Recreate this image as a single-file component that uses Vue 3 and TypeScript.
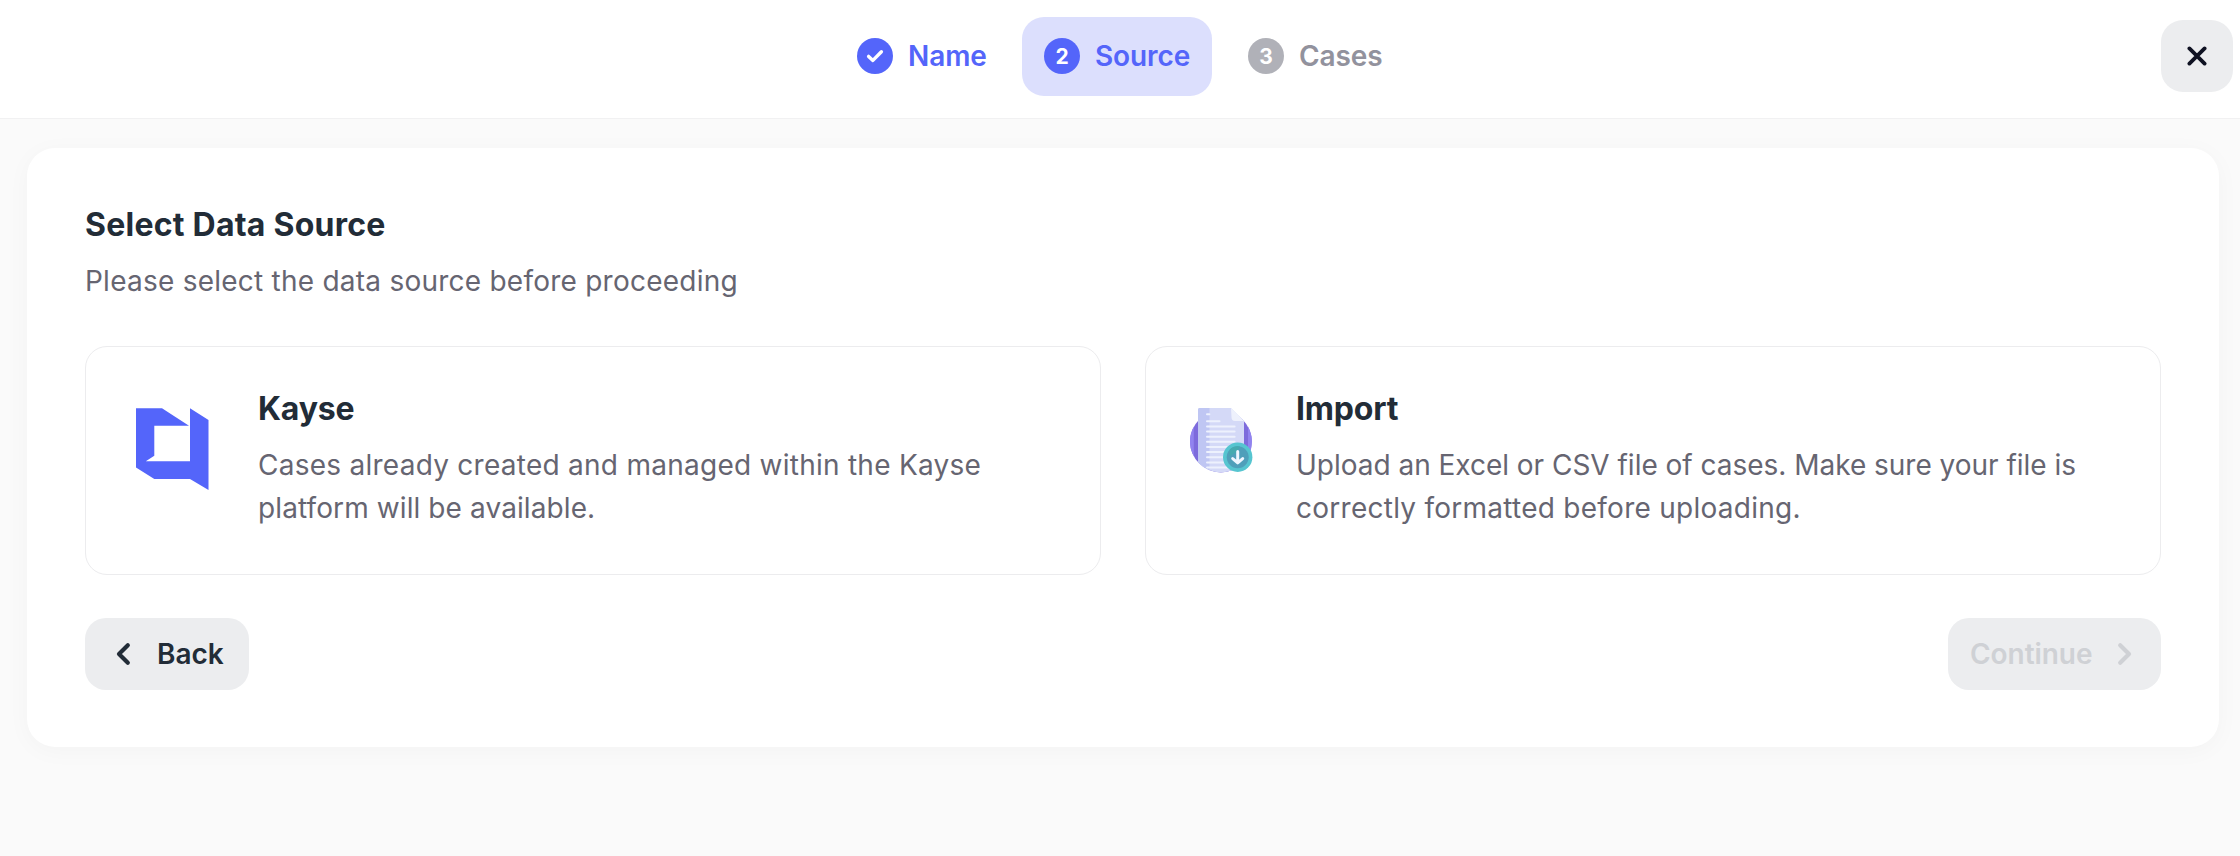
<script setup lang="ts">
import { ref } from 'vue'

interface Step {
  id: number
  label: string
  state: 'done' | 'active' | 'todo'
}

interface Source {
  id: 'kayse' | 'import'
  title: string
  lines: string[]
}

const steps: Step[] = [
  { id: 1, label: 'Name', state: 'done' },
  { id: 2, label: 'Source', state: 'active' },
  { id: 3, label: 'Cases', state: 'todo' },
]

const sources: Source[] = [
  {
    id: 'kayse',
    title: 'Kayse',
    lines: ['Cases already created and managed within the Kayse', 'platform will be available.'],
  },
  {
    id: 'import',
    title: 'Import',
    lines: [
      'Upload an Excel or CSV file of cases. Make sure your file is',
      'correctly formatted before uploading.',
    ],
  },
]

const docLines = [6.3, 13.3, 18.4, 23.6, 28.7, 33.8, 39, 44.1, 49.3, 54.4, 59.5]
const selected = ref<Source['id'] | null>(null)
</script>

<template>
  <div class="page">
    <header class="header">
      <nav class="steps">
        <div v-for="step in steps" :key="step.id" class="step" :class="`step--${step.state}`">
          <span class="step__dot">
            <svg v-if="step.state === 'done'" width="18" height="14" viewBox="0 0 18 14">
              <path d="M2.6 7.4 L6.9 11.4 L15.4 2.8" fill="none" stroke="#fff" stroke-width="3.4" stroke-linecap="round" stroke-linejoin="round" />
            </svg>
            <template v-else>{{ step.id }}</template>
          </span>
          <span class="step__label">{{ step.label }}</span>
        </div>
      </nav>
      <button class="close" type="button" aria-label="Close">
        <svg width="20" height="20" viewBox="0 0 20 20">
          <path d="M2.4 2.4 L17.6 17.6 M17.6 2.4 L2.4 17.6" stroke="#0f1222" stroke-width="3.8" stroke-linecap="round" />
        </svg>
      </button>
    </header>

    <main class="panel">
      <h1 class="title">Select Data Source</h1>
      <p class="subtitle">Please select the data source before proceeding</p>

      <div class="sources">
        <article
          v-for="source in sources"
          :key="source.id"
          class="source"
          :class="`source--${source.id}`"
          @click="selected = source.id"
        >
          <svg v-if="source.id === 'kayse'" class="source__icon" width="73" height="82" viewBox="0 0 73 82">
            <path
              fill="#5465fa"
              fill-rule="evenodd"
              d="M0 .3 H26 L53 17.8 H18.3 V47.8 L9.8 53.2 H54 V.3 L72.5 12 V82 L54 71 H18.3 L0 59.5 Z"
            />
          </svg>
          <svg v-else class="source__icon" width="63" height="66" viewBox="0 0 63 66">
            <defs>
              <clipPath id="sheet">
                <path d="M8 0 H54 V33.5 H61.8 A30.9 30.9 0 0 1 0 33.5 H8 Z" />
              </clipPath>
            </defs>
            <circle cx="30.9" cy="33.5" r="30.9" fill="#7d6bdc" />
            <path d="M3.8 18.5 A30.9 30.9 0 0 0 3.8 48.5 Z M58 18.5 A30.9 30.9 0 0 1 58 48.5 Z" fill="#9183ef" />
            <g clip-path="url(#sheet)">
              <path d="M8 1.5 Q8 0 9.5 0 H41 L54 13 V70 H8 Z" fill="#d4d9f7" />
              <path d="M8 1.5 Q8 0 9.5 0 H19.5 V70 H8 Z" fill="#bfc6f3" />
              <g stroke="#edf1fd" stroke-width="2" stroke-linecap="round">
                <line
                  v-for="(y, i) in docLines"
                  :key="y"
                  x1="17"
                  :y1="y"
                  :x2="i === 0 ? 19.4 : i === 1 ? 29.5 : 44.6"
                  :y2="y"
                />
              </g>
            </g>
            <path d="M41 0 L54 13 H45 Q41.5 13 41.5 9 Z" fill="#eef1fc" />
            <circle cx="47.7" cy="49.2" r="14.7" fill="#56c5d0" />
            <circle cx="47.7" cy="49.2" r="11" fill="#4f9fba" />
            <path d="M39.9 41.5 A11 11 0 0 1 50 38.5 L47 44.2 L39 48.2 Z" fill="#45aab0" />
            <path d="M47.7 43.4 V54.4 M42.7 50.6 L47.7 54.9 L52.7 50.6" fill="none" stroke="#eef6ff" stroke-width="3" stroke-linecap="round" stroke-linejoin="round" />
          </svg>
          <div class="source__body">
            <h2 class="source__title">{{ source.title }}</h2>
            <p class="source__text">
              <span v-for="line in source.lines" :key="line" class="source__line">{{ line }}</span>
            </p>
          </div>
        </article>
      </div>

      <footer class="actions">
        <button class="btn btn--back" type="button">
          <svg width="16" height="24" viewBox="0 0 16 24">
            <path d="M12.8 3.2 L4 12 L12.8 20.8" fill="none" stroke="#222c37" stroke-width="4.2" stroke-linecap="round" stroke-linejoin="round" />
          </svg>
          <span class="btn__label">Back</span>
        </button>
        <button class="btn btn--next" type="button" :disabled="selected === null">
          <span class="btn__label">Continue</span>
          <svg width="16" height="24" viewBox="0 0 16 24">
            <path d="M3.2 3.2 L12 12 L3.2 20.8" fill="none" stroke="#cfd1d5" stroke-width="4.2" stroke-linecap="round" stroke-linejoin="round" />
          </svg>
        </button>
      </footer>
    </main>
  </div>
</template>

<style>
body {
  margin: 0;
  background: #fafafa;
}
</style>

<style scoped>
.page {
  box-sizing: border-box;
  width: 100%;
  height: 856px;
  overflow: hidden;
  background: #fafafa;
  color: #222c37;
  font-family: Inter, "Liberation Sans", sans-serif;
}

.header {
  box-sizing: border-box;
  display: grid;
  grid-template-columns: 1fr auto 1fr;
  align-items: start;
  height: 119px;
  padding: 17px 7px 0;
  border-bottom: 1px solid #f1f1f2;
  background: #fff;
}

.steps {
  grid-column: 2;
  display: flex;
  gap: 14px;
}

.step {
  box-sizing: border-box;
  display: flex;
  align-items: center;
  gap: 15px;
  height: 79px;
  padding: 0 0 1px 22px;
  border-radius: 22px;
  color: #5465fa;
  font-size: 28px;
  font-weight: 600;
  letter-spacing: -0.1px;
}

.step--done {
  width: 173px;
}

.step--active {
  width: 190px;
  background: #dcdffd;
}

.step--todo {
  width: 179px;
  color: #92929d;
}

.step__label {
  padding-bottom: 1px;
}

.step__dot {
  display: flex;
  flex: none;
  align-items: center;
  justify-content: center;
  width: 36px;
  height: 36px;
  border-radius: 50%;
  background: #5465fa;
  color: #fff;
  font-size: 21px;
  font-weight: 700;
  letter-spacing: 0;
}

.step--todo .step__dot {
  background: #b0b1b8;
}

.close {
  grid-column: 3;
  justify-self: end;
  display: flex;
  align-items: center;
  justify-content: center;
  width: 72px;
  height: 72px;
  margin-top: 3px;
  padding: 0;
  border: 0;
  border-radius: 22px;
  background: #ecedef;
}

.panel {
  box-sizing: border-box;
  height: 599px;
  margin: 29px 21px 0 27px;
  padding: 55px 58px 57px;
  border-radius: 28px;
  background: #fff;
  box-shadow: 0 4px 24px rgba(0, 0, 0, 0.03);
}

.title,
.source__title {
  margin: 0;
  font-size: 32px;
  font-weight: 700;
  line-height: 44px;
}

.title {
  letter-spacing: 0.24px;
}

.source__title {
  letter-spacing: -0.2px;
}

.subtitle {
  margin: 13px 0 0;
  color: #666571;
  font-size: 28px;
  line-height: 43px;
  letter-spacing: 0.24px;
}

.sources {
  display: grid;
  grid-template-columns: 1fr 1fr;
  gap: 44px;
  margin-top: 43px;
}

.source {
  box-sizing: border-box;
  display: flex;
  align-items: flex-start;
  height: 229px;
  padding-top: 40px;
  border: 1px solid #ececee;
  border-radius: 22px;
}

.source--kayse {
  gap: 49px;
  padding-left: 50px;
}

.source--import {
  gap: 43px;
  padding-left: 44px;
}

.source__icon {
  flex: none;
  margin-top: 21px;
}

.source__text {
  margin: 13px 0 0;
  color: #666571;
  font-size: 28px;
  line-height: 43px;
  white-space: nowrap;
}

.source__line {
  display: block;
  letter-spacing: 0.26px;
}

.source--kayse .source__line:last-child {
  letter-spacing: 0.1px;
}

.source--import .source__line:first-child {
  letter-spacing: -0.02px;
}

.actions {
  display: flex;
  justify-content: space-between;
  margin-top: 43px;
}

.btn {
  box-sizing: border-box;
  display: flex;
  align-items: center;
  height: 72px;
  padding: 0;
  border: 0;
  border-radius: 21px;
  background: #ecedef;
  color: #222c37;
  font-family: inherit;
  font-size: 28px;
  font-weight: 600;
  letter-spacing: -0.05px;
}

.btn__label {
  padding-bottom: 1px;
}

.btn--back {
  width: 164px;
  gap: 26px;
  padding-left: 30px;
}

.btn--next {
  width: 213px;
  gap: 25px;
  padding-left: 22px;
  color: #cfd1d5;
}
</style>
